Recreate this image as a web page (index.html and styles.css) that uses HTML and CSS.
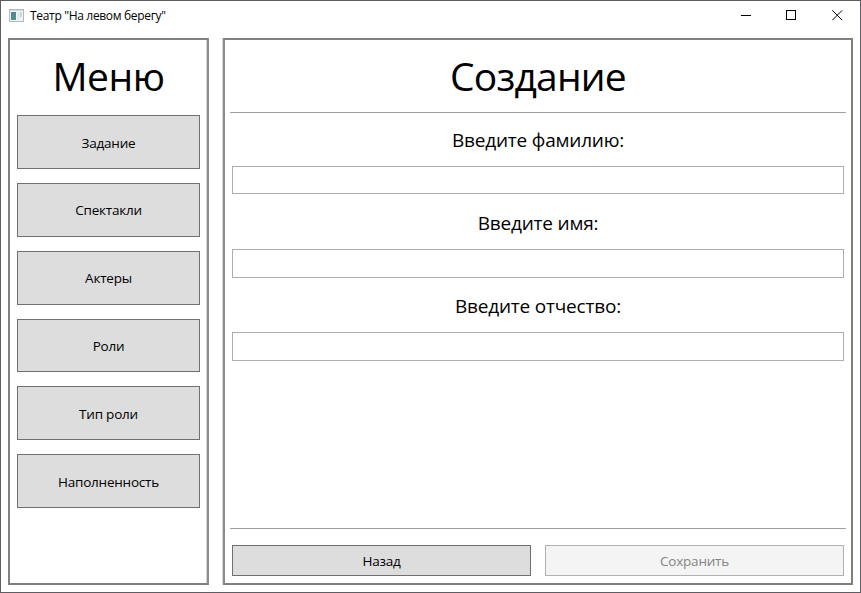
FILE: index.html
```html
<!DOCTYPE html>
<html lang="ru">
<head>
<meta charset="utf-8">
<title>Театр "На левом берегу"</title>
<link rel="stylesheet" href="styles.css">
</head>
<body>
<div class="window">
  <header class="titlebar">
    <svg class="app-icon" width="16" height="16" viewBox="0 0 16 16">
      <defs><linearGradient id="g" x1="0" y1="0" x2="1" y2="1"><stop offset="0" stop-color="#4a7fb0"/><stop offset="1" stop-color="#4f9a70"/></linearGradient></defs>
      <rect x=".5" y="1.5" width="14" height="12" fill="#f2f4f6" stroke="#b4b8bc"/>
      <rect x="1" y="2" width="13" height="1" fill="#d5dade"/>
      <rect x="2" y="4" width="5" height="8" fill="url(#g)"/>
      <rect x="8" y="4" width="3" height="8" fill="#e4eaf2"/>
      <rect x="11" y="4" width="2" height="5" fill="#c3dccd"/>
    </svg>
    <span class="caption">Театр "На левом берегу"</span>
    <div class="controls">
      <svg width="11" height="11" viewBox="0 0 11 11" shape-rendering="crispEdges"><path d="M1 5.5H11" stroke="#000" fill="none"/></svg>
      <svg width="11" height="11" viewBox="0 0 11 11" shape-rendering="crispEdges"><rect x=".5" y=".5" width="9" height="9" stroke="#000" fill="none"/></svg>
      <svg width="11" height="11" viewBox="0 0 11 11"><path d="M.3 .3L10.2 10.2M10.2 .3L.3 10.2" stroke="#000" fill="none"/></svg>
    </div>
  </header>
  <div class="content">
    <nav class="panel menu">
      <h1 class="heading heading-menu">Меню</h1>
      <div class="menu-list">
        <button class="btn">Задание</button>
        <button class="btn">Спектакли</button>
        <button class="btn">Актеры</button>
        <button class="btn">Роли</button>
        <button class="btn">Тип роли</button>
        <button class="btn">Наполненность</button>
      </div>
    </nav>
    <main class="panel form">
      <h1 class="heading">Создание</h1>
      <div class="line"></div>
      <div class="fields">
        <label class="field"><span>Введите фамилию:</span><input type="text"></label>
        <label class="field"><span>Введите имя:</span><input type="text"></label>
        <label class="field"><span>Введите отчество:</span><input type="text"></label>
      </div>
      <div class="line"></div>
      <div class="actions">
        <button class="btn">Назад</button>
        <button class="btn" disabled>Сохранить</button>
      </div>
    </main>
  </div>
</div>
</body>
</html>
```
FILE: styles.css
```css
* { box-sizing: border-box; }
body { margin: 0; font-family: "Open Sans", "Noto Sans", sans-serif; color: #000; background: #fff; }
.window { width: 861px; height: 593px; border: 1px solid #5d5d62; background: #fff; display: flex; flex-direction: column; overflow: hidden; }
.titlebar { height: 29px; flex: none; display: flex; align-items: center; padding-left: 8px; }
.app-icon { margin-right: 5px; }
.caption { font-size: 12px; line-height: 16px; letter-spacing: -0.32px; white-space: nowrap; }
.controls { margin-left: auto; display: flex; gap: 35px; padding-right: 17px; }
.controls svg { display: block; }
.content { flex: 1; display: flex; gap: 14px; padding: 8px 7px 7px; }
.panel { border: 2px solid #808080; display: flex; flex-direction: column; }
.menu { width: 201px; padding: 0 7px; border-right-color: #8c8c8c; box-shadow: inset -1px 0 #d8d8d8; }
.form { flex: 1; padding: 0 5px; border-left-color: #8c8c8c; box-shadow: -1px 0 #d8d8d8; }
.heading { margin: 0; height: 72px; flex: none; font-size: 39px; line-height: 71px; font-weight: 400; text-align: center; letter-spacing: -0.8px; }
.heading-menu { letter-spacing: -0.5px; }
.menu-list { display: flex; flex-direction: column; gap: 14px; padding-top: 3.2px; }
.btn { height: 53.8px; flex: none; padding: 0; border: 1px solid #707070; border-radius: 0; background: #ddd; color: #000; font: 13.5px/18px "Open Sans", "Noto Sans", sans-serif; letter-spacing: -0.22px; }
.menu-list .btn { padding-top: 1px; }
.btn:disabled { border-color: #adb2b5; background: #f4f4f4; color: #838383; }
.line { height: 1px; flex: none; background: #a0a0a0; }
.fields { height: 415px; flex: none; padding: 0 2px; }
.field { display: flex; flex-direction: column; align-items: stretch; height: 83.2px; }
.field span { height: 52.9px; font-size: 19px; line-height: 54px; text-align: center; letter-spacing: -0.2px; }
.field input { width: 100%; height: 28.5px; margin: 0; padding: 0 4px; border: 1px solid #abadb3; border-radius: 0; background: #fff; font: inherit; font-size: 14px; }
.actions { display: grid; grid-template-columns: 1fr 1fr; gap: 14px; padding: 16px 2px 0; }
.actions .btn { height: 31px; }
```
